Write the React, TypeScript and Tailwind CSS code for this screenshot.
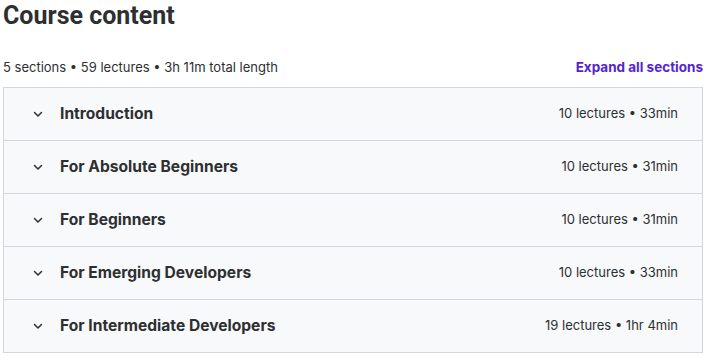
import React from "react";

const sections = [
  { title: "Introduction", meta: "10 lectures • 33min" },
  { title: "For Absolute Beginners", meta: "10 lectures • 31min" },
  { title: "For Beginners", meta: "10 lectures • 31min" },
  { title: "For Emerging Developers", meta: "10 lectures • 33min" },
  { title: "For Intermediate Developers", meta: "19 lectures • 1hr 4min" },
];

function Chevron() {
  return (
    <svg width="12" height="12" viewBox="0 0 12 12" fill="none" className="shrink-0">
      <path d="M2.5 4.5 L6 8 L9.5 4.5" stroke="#2d2f31" strokeWidth="1.5" strokeLinecap="round" strokeLinejoin="round" />
    </svg>
  );
}

export default function App() {
  return (
    <div className="w-[706px] h-[358px] bg-white text-[#2d2f31]" style={{ fontFamily: "Inter, 'Noto Sans', sans-serif" }}>
      <div className="pl-[3px] pr-[3px]">
        <h2
          className="text-[25px] leading-[32px] font-bold"
          style={{ fontFamily: "Roboto, Inter, sans-serif" }}
        >
          Course content
        </h2>
        <div className="flex items-end justify-between mt-[26px] h-[18px]">
          <span className="text-[13px] leading-[18px] text-[#2d2f31]">5 sections • 59 lectures • 3h 11m total length</span>
          <span className="text-[13.5px] leading-[18px] font-bold text-[#5624d0]">Expand all sections</span>
        </div>
        <div className="mt-[11px] border border-[#d1d7dc] w-[700px]">
          {sections.map((s, i) => (
            <div
              key={s.title}
              className={`flex items-center box-content h-[52px] bg-[#f7f9fa] pl-[28px] pr-[24px] ${i > 0 ? "border-t border-[#d1d7dc]" : ""}`}
            >
              <Chevron />
              <span className="ml-[16px] text-[15.6px] font-bold text-[#2d2f31] flex-1">{s.title}</span>
              <span className="text-[13px] text-[#2d2f31]">{s.meta}</span>
            </div>
          ))}
        </div>
      </div>
    </div>
  );
}
